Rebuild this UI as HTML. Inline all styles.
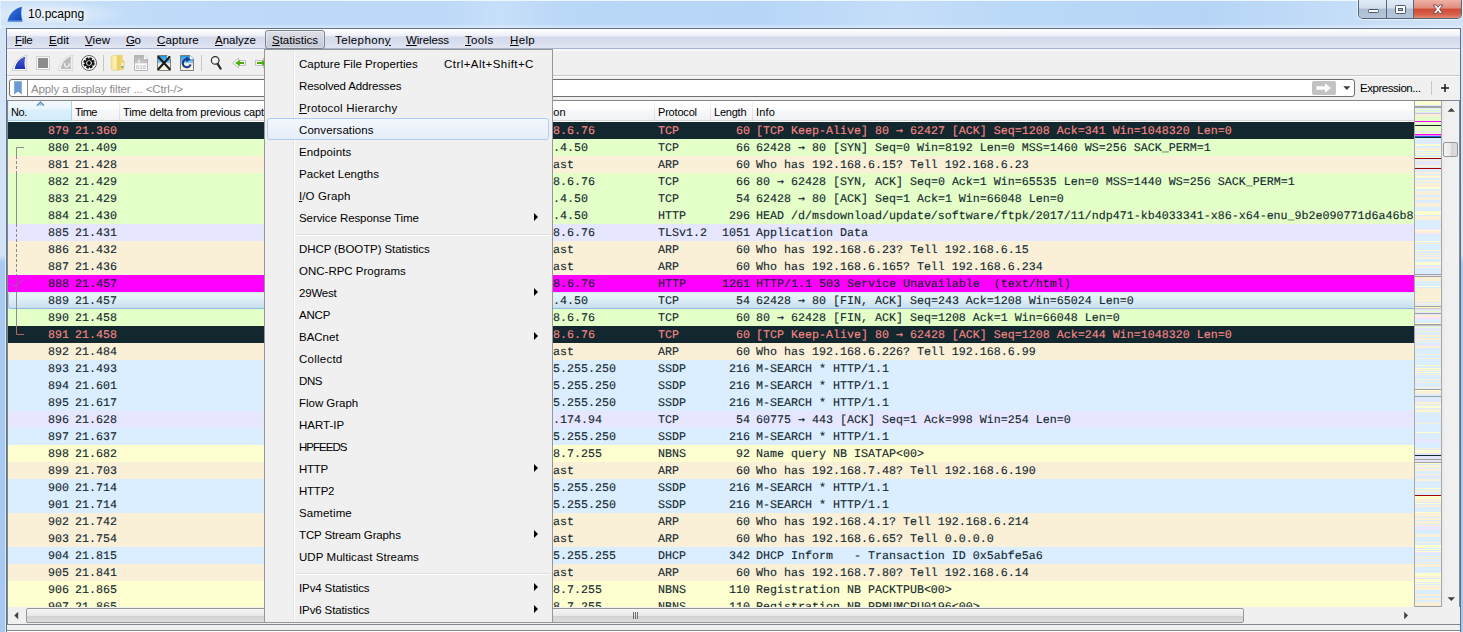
<!DOCTYPE html>
<html><head><meta charset="utf-8"><title>10.pcapng</title>
<style>
*{box-sizing:border-box;margin:0;padding:0}
html,body{width:1463px;height:632px;overflow:hidden}
body{position:relative;font-family:"Liberation Sans",sans-serif;font-size:12px;color:#000;
 background:linear-gradient(90deg,#cfe3f8 0,#c6def8 90px,#bddaf8 170px,#bcd9f8 440px,#c7dff9 500px,#b9d7f7 565px,#b7d6f7 760px,#c5def9 900px,#bad8f7 1010px,#b6d5f6 1210px,#c4ddf8 1340px,#d0e3f8 1463px)}
.abs,.abs>*{position:absolute}
div,span{position:absolute}
u{text-decoration:underline;text-underline-offset:1px}
/* frame */
#lb{left:0;top:29px;width:6px;height:603px;background:linear-gradient(178deg,#d5e5f8 0,#d3e3f7 226px,#a9caf0 233px,#a7c9f0 603px)}
#lb2{left:0;top:0;width:1px;height:632px;background:#e9f1fa}
#lb3{left:5px;top:29px;width:1px;height:603px;background:#dce9f7}
#rb{left:1461px;top:29px;width:2px;height:603px;background:linear-gradient(180deg,#d5e5f8 0,#d3e3f7 226px,#a9caf0 233px,#a7c9f0 603px)}
#client{left:6px;top:28px;width:1455px;height:610px;background:#f0f0f0;border:1px solid #5f7186;border-bottom:0}
/* title */
#ttop{left:0;top:0;width:1463px;height:1px;background:rgba(255,255,255,.75)}
#tbot{left:0;top:24px;width:1463px;height:4px;background:linear-gradient(180deg,rgba(255,255,255,0),rgba(255,255,255,.4))}
#tglow{left:-10px;top:0;width:160px;height:28px;background:radial-gradient(ellipse 75px 13px at 62px 14px,rgba(255,255,255,.55),rgba(255,255,255,0))}
#tbw{left:7px;top:50px;width:1453px;height:1px;background:#fbfbfb}
#ttl{left:28px;top:6px;font-size:12px;line-height:16px;color:#000;white-space:nowrap;text-shadow:0 0 6px #fff,0 0 6px #fff}
/* caption buttons */
#cap{left:1358px;top:0;width:104px;height:19px;border:1px solid #55657a;border-top:0;border-radius:0 0 5px 5px;overflow:hidden;box-shadow:0 0 0 1px rgba(255,255,255,.55)}
#cmin{left:0;top:0;width:28px;height:18px;background:linear-gradient(180deg,#e3ecf6 0,#d3dfed 45%,#aebfd4 50%,#b6c6da 100%);border-right:1px solid #55657a}
#cmax{left:28px;top:0;width:27px;height:18px;background:linear-gradient(180deg,#e3ecf6 0,#d3dfed 45%,#aebfd4 50%,#b6c6da 100%);border-right:1px solid #55657a}
#ccls{left:55px;top:0;width:47px;height:18px;background:linear-gradient(180deg,#eeb3a6 0,#e08c7c 45%,#cf4a33 50%,#d8604a 80%,#e08b72 100%)}
/* menubar */
#mb{left:7px;top:29px;width:1453px;height:21px;background:linear-gradient(180deg,#ffffff 0,#f0f2f9 6px,#e9ecf6 7px,#d5daec 8px,#d9deee 14px,#e2e6f3 19px,#e2e6f3 19px,#a9b3cf 19px,#a9b3cf 20px,#f4f4f6 20px)}
.mt{top:32px;font-size:11.5px;line-height:16px;white-space:nowrap}
#stat{left:265px;top:30px;width:60px;height:19px;border:1px solid #7b8494;border-radius:3px;background:linear-gradient(180deg,#dfe1e8 0,#d1d4de 50%,#c4c8d5 100%);box-shadow:inset 0 0 0 1px rgba(255,255,255,.35)}
/* toolbar */
#tbl1{left:7px;top:75px;width:1453px;height:1px;background:#c8c8c8}
#tbl2{left:7px;top:76px;width:1453px;height:1px;background:#fcfcfc}
.tsep{top:55px;width:1px;height:16px;background:#c6c6c6}
svg{position:absolute;overflow:visible}
/* filter */
#ff{left:9px;top:79px;width:1346px;height:18px;border:1px solid #6e6e6e;border-radius:3px;background:#fff}
#ffs{left:27px;top:80px;width:1px;height:16px;background:#8a8a8a}
#fph{left:31px;top:82px;font-size:11.5px;line-height:15px;color:#8c8c8c;white-space:nowrap;letter-spacing:-0.13px}
#fgo{left:1312px;top:81px;width:24px;height:14px;border-radius:2px;background:#c2c2c2}
#fexp{left:1360px;top:80px;font-size:11.5px;line-height:16px;white-space:nowrap;letter-spacing:-0.46px}
#fsep{left:1431px;top:81px;width:1px;height:14px;background:#c6c6c6}
/* list */
#lst{left:7px;top:100px;width:1453px;height:525px;border:1px solid #828790;background:#fff;overflow:hidden}
#hdr{left:8px;top:101px;width:1406px;height:20px;background:linear-gradient(180deg,#fff 0,#fff 8px,#f7f8fa 9px,#f1f2f4 19px,#d5d5d5 19px,#d5d5d5 20px)}
#hno{left:8px;top:101px;width:64px;height:20px;background:linear-gradient(180deg,#f2f9fd 0,#eaf6fd 8px,#dbeffb 9px,#d6ecfa 19px);border:1px solid #a3d6f2;border-top:0;border-left-color:#d9eef9}
.hs{top:102px;width:1px;height:18px;background:linear-gradient(180deg,#f2f2f2,#dcdcdc)}
.ht{top:105px;font-size:11px;line-height:14px;white-space:nowrap;color:#000}
.r{left:8px;width:1406px;height:17px;font-family:"Liberation Mono",monospace;font-size:11.667px;letter-spacing:0;line-height:17px;text-rendering:geometricPrecision;-webkit-text-stroke:0.12px;color:#12272e;white-space:pre;overflow:hidden}
.r span{top:1px;height:17px}
.r i{font-family:"DejaVu Sans Mono","Liberation Mono",monospace;font-style:normal;font-size:11.63px;line-height:0}
.no{left:0;width:61px;text-align:right}
.tm{left:67px}
.ds{left:503px}
.pr{left:650px}
.ln{left:702px;width:40px;text-align:right}
.in{left:748px}
.dk{background:#12272e;color:#f78787}
.gr{background:#e4ffc7}
.ar{background:#faf0d7}
.lv{background:#e7e6ff}
.mg{background:#ff00ff}
.bl{background:#daeeff}
.yl{background:#feffd0}
.sel{background:linear-gradient(180deg,#eaf6f7 0,#e1f0f6 35%,#d2e6f3 70%,#c7deef 100%);border-radius:3px 0 0 3px;box-shadow:inset 1px 0 0 #a9cbe8,inset 0 1px 0 #d3e8f5,inset 0 -1px 0 #8fb9e6}
/* minimap */
#mm{left:1414px;top:101px;width:28px;height:506px;background:#e9eefc;border-left:1px solid #a8a8a8;border-right:1px solid #a8a8a8}
#mmi{left:0;top:0;width:26px;height:506px;background:linear-gradient(180deg,#feffd0 0px,#feffd0 4px,#daeeff 4px,#daeeff 5px,#a0a0a0 5px,#a0a0a0 6px,#a9a9a9 6px,#a9a9a9 7px,#e7e6ff 7px,#e7e6ff 8px,#e4ffc7 8px,#e4ffc7 9px,#daeeff 9px,#daeeff 10px,#e4ffc7 10px,#e4ffc7 11px,#e7e6ff 11px,#e7e6ff 12px,#c8c8d4 12px,#c8c8d4 13px,#faf0d7 13px,#faf0d7 16px,#e4ffc7 16px,#e4ffc7 20px,#ff00ff 20px,#ff00ff 21px,#e4ffc7 21px,#e4ffc7 24px,#12272e 24px,#12272e 25px,#e4ffc7 25px,#e4ffc7 30px,#e7e6ff 30px,#e7e6ff 31px,#e4ffc7 31px,#e4ffc7 33px,#ff00ff 33px,#ff00ff 34px,#e48af6 34px,#e48af6 35px,#1b6fe0 35px,#1b6fe0 36px,#12272e 36px,#12272e 37px,#daeeff 37px,#daeeff 41px,#e7e6ff 41px,#e7e6ff 42px,#daeeff 42px,#daeeff 43px,#feffd0 43px,#feffd0 45px,#daeeff 45px,#daeeff 47px,#faf0d7 47px,#faf0d7 49px,#feffd0 49px,#feffd0 50px,#daeeff 50px,#daeeff 51px,#feffd0 51px,#feffd0 52px,#daeeff 52px,#daeeff 53px,#feffd0 53px,#feffd0 54px,#daeeff 54px,#daeeff 56px,#feffd0 56px,#feffd0 57px,#a40000 57px,#a40000 58px,#daeeff 58px,#daeeff 59px,#faf0d7 59px,#faf0d7 60px,#e7e6ff 60px,#e7e6ff 64px,#faf0d7 64px,#faf0d7 66px,#daeeff 66px,#daeeff 67px,#a40000 67px,#a40000 68px,#e7e6ff 68px,#e7e6ff 69px,#daeeff 69px,#daeeff 70px,#e7e6ff 70px,#e7e6ff 71px,#faf0d7 71px,#faf0d7 73px,#daeeff 73px,#daeeff 74px,#faf0d7 74px,#faf0d7 75px,#feffd0 75px,#feffd0 76px,#faf0d7 76px,#faf0d7 77px,#daeeff 77px,#daeeff 79px,#faf0d7 79px,#faf0d7 81px,#daeeff 81px,#daeeff 82px,#faf0d7 82px,#faf0d7 86px,#feffd0 86px,#feffd0 88px,#daeeff 88px,#daeeff 90px,#faf0d7 90px,#faf0d7 94px,#daeeff 94px,#daeeff 96px,#faf0d7 96px,#faf0d7 99px,#daeeff 99px,#daeeff 101px,#e7e6ff 101px,#e7e6ff 102px,#faf0d7 102px,#faf0d7 106px,#daeeff 106px,#daeeff 110px,#feffd0 110px,#feffd0 114px,#daeeff 114px,#daeeff 115px,#faf0d7 115px,#faf0d7 119px,#daeeff 119px,#daeeff 128px,#fce0ff 128px,#fce0ff 129px,#feffd0 129px,#feffd0 130px,#faf0d7 130px,#faf0d7 132px,#fce0ff 132px,#fce0ff 133px,#daeeff 133px,#daeeff 140px,#feffd0 140px,#feffd0 141px,#daeeff 141px,#daeeff 142px,#faf0d7 142px,#faf0d7 143px,#daeeff 143px,#daeeff 149px,#feffd0 149px,#feffd0 150px,#daeeff 150px,#daeeff 152px,#faf0d7 152px,#faf0d7 153px,#daeeff 153px,#daeeff 154px,#faf0d7 154px,#faf0d7 155px,#daeeff 155px,#daeeff 156px,#faf0d7 156px,#faf0d7 158px,#daeeff 158px,#daeeff 161px,#feffd0 161px,#feffd0 164px,#daeeff 164px,#daeeff 165px,#fce0ff 165px,#fce0ff 166px,#faf0d7 166px,#faf0d7 167px,#daeeff 167px,#daeeff 173px,#a0a0a0 173px,#a0a0a0 174px,#e7e6ff 174px,#e7e6ff 175px,#a0a0a0 175px,#a0a0a0 176px,#faf0d7 176px,#faf0d7 180px,#daeeff 180px,#daeeff 185px,#feffd0 185px,#feffd0 186px,#daeeff 186px,#daeeff 187px,#faf0d7 187px,#faf0d7 201px,#daeeff 201px,#daeeff 202px,#faf0d7 202px,#faf0d7 203px,#daeeff 203px,#daeeff 204px,#faf0d7 204px,#faf0d7 205px,#a0a0a0 205px,#a0a0a0 206px,#feffd0 206px,#feffd0 207px,#c4c4c4 207px,#c4c4c4 208px,#e7e6ff 208px,#e7e6ff 210px,#e4ffc7 210px,#e4ffc7 211px,#e7e6ff 211px,#e7e6ff 212px,#a0a0a0 212px,#a0a0a0 213px,#e7e6ff 213px,#e7e6ff 214px,#faf0d7 214px,#faf0d7 216px,#fce0ff 216px,#fce0ff 218px,#daeeff 218px,#daeeff 222px,#feffd0 222px,#feffd0 223px,#a0a0a0 223px,#a0a0a0 224px,#c4c4c4 224px,#c4c4c4 225px,#e7e6ff 225px,#e7e6ff 226px,#e4ffc7 226px,#e4ffc7 227px,#e7e6ff 227px,#e7e6ff 230px,#e4ffc7 230px,#e4ffc7 231px,#e7e6ff 231px,#e7e6ff 232px,#daeeff 232px,#daeeff 234px,#faf0d7 234px,#faf0d7 236px,#daeeff 236px,#daeeff 237px,#faf0d7 237px,#faf0d7 239px,#daeeff 239px,#daeeff 240px,#faf0d7 240px,#faf0d7 241px,#daeeff 241px,#daeeff 244px,#fce0ff 244px,#fce0ff 245px,#faf0d7 245px,#faf0d7 247px,#daeeff 247px,#daeeff 253px,#faf0d7 253px,#faf0d7 254px,#daeeff 254px,#daeeff 257px,#faf0d7 257px,#faf0d7 258px,#daeeff 258px,#daeeff 264px,#feffd0 264px,#feffd0 265px,#daeeff 265px,#daeeff 267px,#feffd0 267px,#feffd0 268px,#faf0d7 268px,#faf0d7 270px,#daeeff 270px,#daeeff 271px,#feffd0 271px,#feffd0 272px,#daeeff 272px,#daeeff 273px,#faf0d7 273px,#faf0d7 274px,#daeeff 274px,#daeeff 278px,#faf0d7 278px,#faf0d7 279px,#daeeff 279px,#daeeff 281px,#faf0d7 281px,#faf0d7 282px,#daeeff 282px,#daeeff 286px,#faf0d7 286px,#faf0d7 287px,#daeeff 287px,#daeeff 288px,#a0a0a0 288px,#a0a0a0 289px,#feffd0 289px,#feffd0 290px,#faf0d7 290px,#faf0d7 293px,#daeeff 293px,#daeeff 295px,#a0a0a0 295px,#a0a0a0 296px,#daeeff 296px,#daeeff 298px,#e7e6ff 298px,#e7e6ff 300px,#daeeff 300px,#daeeff 301px,#faf0d7 301px,#faf0d7 304px,#daeeff 304px,#daeeff 305px,#feffd0 305px,#feffd0 307px,#daeeff 307px,#daeeff 308px,#faf0d7 308px,#faf0d7 310px,#feffd0 310px,#feffd0 311px,#daeeff 311px,#daeeff 319px,#e7e6ff 319px,#e7e6ff 320px,#daeeff 320px,#daeeff 322px,#faf0d7 322px,#faf0d7 323px,#daeeff 323px,#daeeff 331px,#feffd0 331px,#feffd0 332px,#daeeff 332px,#daeeff 338px,#e7e6ff 338px,#e7e6ff 342px,#daeeff 342px,#daeeff 347px,#faf0d7 347px,#faf0d7 348px,#daeeff 348px,#daeeff 349px,#feffd0 349px,#feffd0 352px,#e7e6ff 352px,#e7e6ff 354px,#12272e 354px,#12272e 355px,#e7e6ff 355px,#e7e6ff 358px,#a0a0a0 358px,#a0a0a0 359px,#e7e6ff 359px,#e7e6ff 361px,#a0a0a0 361px,#a0a0a0 362px,#feffd0 362px,#feffd0 363px,#daeeff 363px,#daeeff 364px,#faf0d7 364px,#faf0d7 367px,#daeeff 367px,#daeeff 368px,#faf0d7 368px,#faf0d7 370px,#daeeff 370px,#daeeff 373px,#faf0d7 373px,#faf0d7 374px,#e7e6ff 374px,#e7e6ff 376px,#daeeff 376px,#daeeff 378px,#faf0d7 378px,#faf0d7 380px,#daeeff 380px,#daeeff 387px,#feffd0 387px,#feffd0 388px,#daeeff 388px,#daeeff 389px,#faf0d7 389px,#faf0d7 391px,#daeeff 391px,#daeeff 394px,#a40000 394px,#a40000 395px,#feffd0 395px,#feffd0 398px,#faf0d7 398px,#faf0d7 401px,#daeeff 401px,#daeeff 402px,#feffd0 402px,#feffd0 403px,#daeeff 403px,#daeeff 404px,#faf0d7 404px,#faf0d7 406px,#daeeff 406px,#daeeff 411px,#feffd0 411px,#feffd0 412px,#faf0d7 412px,#faf0d7 416px,#daeeff 416px,#daeeff 417px,#faf0d7 417px,#faf0d7 419px,#daeeff 419px,#daeeff 420px,#faf0d7 420px,#faf0d7 423px,#daeeff 423px,#daeeff 424px,#faf0d7 424px,#faf0d7 425px,#fce0ff 425px,#fce0ff 426px,#daeeff 426px,#daeeff 427px,#fce0ff 427px,#fce0ff 428px,#daeeff 428px,#daeeff 433px,#faf0d7 433px,#faf0d7 436px,#daeeff 436px,#daeeff 441px,#faf0d7 441px,#faf0d7 442px,#daeeff 442px,#daeeff 444px,#feffd0 444px,#feffd0 447px,#daeeff 447px,#daeeff 448px,#feffd0 448px,#feffd0 449px,#daeeff 449px,#daeeff 450px,#feffd0 450px,#feffd0 451px,#fce0ff 451px,#fce0ff 452px,#daeeff 452px,#daeeff 455px,#faf0d7 455px,#faf0d7 456px,#daeeff 456px,#daeeff 457px,#faf0d7 457px,#faf0d7 458px,#daeeff 458px,#daeeff 461px,#faf0d7 461px,#faf0d7 462px,#daeeff 462px,#daeeff 463px,#faf0d7 463px,#faf0d7 466px,#daeeff 466px,#daeeff 472px,#feffd0 472px,#feffd0 475px,#faf0d7 475px,#faf0d7 477px,#daeeff 477px,#daeeff 478px,#feffd0 478px,#feffd0 481px,#daeeff 481px,#daeeff 482px,#feffd0 482px,#feffd0 483px,#daeeff 483px,#daeeff 484px,#faf0d7 484px,#faf0d7 489px,#daeeff 489px,#daeeff 493px,#faf0d7 493px,#faf0d7 495px,#daeeff 495px,#daeeff 497px,#faf0d7 497px,#faf0d7 499px,#daeeff 499px,#daeeff 501px,#faf0d7 501px,#faf0d7 505px,#a0a0a0 505px,#a0a0a0 506px)}
/* scrollbars */
#vs{left:1442px;top:101px;width:17px;height:506px;background:linear-gradient(90deg,#e8e8e8 0,#f0f0f0 3px,#f1f1f1 100%)}
#vst{left:1443px;top:142px;width:15px;height:15px;border:1px solid #979797;border-radius:2px;background:linear-gradient(90deg,#f4f4f4 0,#e9e9e9 50%,#d5d5d5 55%,#dcdcdc 100%)}
#hsb{left:8px;top:607px;width:1406px;height:17px;background:#f0f0f0}
#hst{left:26px;top:608px;width:1218px;height:15px;border:1px solid #979797;border-radius:2px;background:linear-gradient(180deg,#f4f4f4 0,#e9e9e9 50%,#d2d2d2 55%,#dcdcdc 100%)}
#hcr{left:1414px;top:607px;width:46px;height:17px;background:#f0f0f0}
#btm{left:7px;top:625px;width:1453px;height:7px;background:#f0f0f0}
#btm2{left:7px;top:630px;width:1453px;height:2px;background:#fff;border-top:1px solid #828790}
/* menu */
#menu{left:264px;top:49px;width:289px;height:574px;background:#f0f0f0;border:1px solid #979797}
#mg1{left:293px;top:52px;width:1px;height:568px;background:#e2e3e3}
#mg2{left:294px;top:52px;width:1px;height:568px;background:#fff}
.mi{left:267px;width:283px;height:22px;font-size:11.5px;line-height:22px;white-space:nowrap}
.ml{left:32px;top:1px}
.ms{left:177px;top:1px}
.ma{left:267px;top:7px;width:0;height:0;border-left:4px solid #000;border-top:4px solid transparent;border-bottom:4px solid transparent}
.mhl{left:267px;width:282px;height:22px;border:1px solid #aecff7;border-radius:3px;background:linear-gradient(180deg,#f3f7fc 0,#e6eefa 100%)}
.msep{left:295px;width:255px;height:2px;border-top:1px solid #e0e0e0;border-bottom:1px solid #fff}

</style></head><body>
<div id="ttop"></div><div id="tbot"></div><div id="tglow"></div><div id="lb2"></div>
<div id="ttl">10.pcapng</div>
<div id="cap"><div id="cmin"></div><div id="cmax"></div><div id="ccls"></div></div>
<div id="client"></div>
<div id="lb"></div><div id="lb3"></div><div id="rb"></div>
<div id="mb"></div>
<div id="stat"></div>
<div class="mt" style="left:15px;letter-spacing:-0.27px"><u>F</u>ile</div>
<div class="mt" style="left:49px;letter-spacing:0.04px"><u>E</u>dit</div>
<div class="mt" style="left:85px;letter-spacing:0.07px"><u>V</u>iew</div>
<div class="mt" style="left:126px;letter-spacing:-0.37px"><u>G</u>o</div>
<div class="mt" style="left:157px;letter-spacing:0.14px"><u>C</u>apture</div>
<div class="mt" style="left:215px;letter-spacing:-0.00px"><u>A</u>nalyze</div>
<div class="mt" style="left:272px;letter-spacing:-0.01px"><u>S</u>tatistics</div>
<div class="mt" style="left:335px;letter-spacing:0.38px">Telephon<u>y</u></div>
<div class="mt" style="left:406px;letter-spacing:-0.15px"><u>W</u>ireless</div>
<div class="mt" style="left:465px;letter-spacing:0.33px"><u>T</u>ools</div>
<div class="mt" style="left:510px;letter-spacing:0.36px"><u>H</u>elp</div>
<div id="tbw"></div><div id="tbl1"></div><div id="tbl2"></div>
<div class="tsep" style="left:103px"></div>
<div class="tsep" style="left:201px"></div>
<div id="ff"></div><div id="ffs"></div>
<div id="fph">Apply a display filter ... &lt;Ctrl-/&gt;</div>
<div id="fgo"></div>
<div id="fexp">Expression...</div>
<div id="fsep"></div>
<div id="lst"></div>
<div id="hdr"></div><div id="hno"></div>
<div class="hs" style="left:119px"></div>
<div class="hs" style="left:654px"></div>
<div class="hs" style="left:710px"></div>
<div class="hs" style="left:752px"></div>
<div class="ht" style="left:11px;letter-spacing:-0.37px">No.</div>
<div class="ht" style="left:75px;letter-spacing:-0.55px">Time</div>
<div class="ht" style="left:123px;letter-spacing:-0.12px">Time delta from previous captured frame</div>
<div class="ht" style="left:511px;letter-spacing:-0.05px">Destination</div>
<div class="ht" style="left:658px;letter-spacing:-0.19px">Protocol</div>
<div class="ht" style="left:714px;letter-spacing:-0.23px">Length</div>
<div class="ht" style="left:756px;letter-spacing:0.15px">Info</div>
<div class="r dk" style="top:122px"><span class="no">879</span><span class="tm">21.360</span><span class="ds">192.168.6.76</span><span class="pr">TCP</span><span class="ln">60</span><span class="in">[TCP Keep-Alive] 80 <i>→</i> 62427 [ACK] Seq=1208 Ack=341 Win=1048320 Len=0</span></div>
<div class="r gr" style="top:139px"><span class="no">880</span><span class="tm">21.409</span><span class="ds">13.107.4.50</span><span class="pr">TCP</span><span class="ln">66</span><span class="in">62428 <i>→</i> 80 [SYN] Seq=0 Win=8192 Len=0 MSS=1460 WS=256 SACK_PERM=1</span></div>
<div class="r ar" style="top:156px"><span class="no">881</span><span class="tm">21.428</span><span class="ds">Broadcast</span><span class="pr">ARP</span><span class="ln">60</span><span class="in">Who has 192.168.6.15? Tell 192.168.6.23</span></div>
<div class="r gr" style="top:173px"><span class="no">882</span><span class="tm">21.429</span><span class="ds">192.168.6.76</span><span class="pr">TCP</span><span class="ln">66</span><span class="in">80 <i>→</i> 62428 [SYN, ACK] Seq=0 Ack=1 Win=65535 Len=0 MSS=1440 WS=256 SACK_PERM=1</span></div>
<div class="r gr" style="top:190px"><span class="no">883</span><span class="tm">21.429</span><span class="ds">13.107.4.50</span><span class="pr">TCP</span><span class="ln">54</span><span class="in">62428 <i>→</i> 80 [ACK] Seq=1 Ack=1 Win=66048 Len=0</span></div>
<div class="r gr" style="top:207px"><span class="no">884</span><span class="tm">21.430</span><span class="ds">13.107.4.50</span><span class="pr">HTTP</span><span class="ln">296</span><span class="in">HEAD /d/msdownload/update/software/ftpk/2017/11/ndp471-kb4033341-x86-x64-enu_9b2e090771d6a46b8</span></div>
<div class="r lv" style="top:224px"><span class="no">885</span><span class="tm">21.431</span><span class="ds">192.168.6.76</span><span class="pr">TLSv1.2</span><span class="ln">1051</span><span class="in">Application Data</span></div>
<div class="r ar" style="top:241px"><span class="no">886</span><span class="tm">21.432</span><span class="ds">Broadcast</span><span class="pr">ARP</span><span class="ln">60</span><span class="in">Who has 192.168.6.23? Tell 192.168.6.15</span></div>
<div class="r ar" style="top:258px"><span class="no">887</span><span class="tm">21.436</span><span class="ds">Broadcast</span><span class="pr">ARP</span><span class="ln">60</span><span class="in">Who has 192.168.6.165? Tell 192.168.6.234</span></div>
<div class="r mg" style="top:275px"><span class="no">888</span><span class="tm">21.457</span><span class="ds">192.168.6.76</span><span class="pr">HTTP</span><span class="ln">1261</span><span class="in">HTTP/1.1 503 Service Unavailable  (text/html)</span></div>
<div class="r sel" style="top:292px"><span class="no">889</span><span class="tm">21.457</span><span class="ds">13.107.4.50</span><span class="pr">TCP</span><span class="ln">54</span><span class="in">62428 <i>→</i> 80 [FIN, ACK] Seq=243 Ack=1208 Win=65024 Len=0</span></div>
<div class="r gr" style="top:309px"><span class="no">890</span><span class="tm">21.458</span><span class="ds">192.168.6.76</span><span class="pr">TCP</span><span class="ln">60</span><span class="in">80 <i>→</i> 62428 [FIN, ACK] Seq=1208 Ack=1 Win=66048 Len=0</span></div>
<div class="r dk" style="top:326px"><span class="no">891</span><span class="tm">21.458</span><span class="ds">192.168.6.76</span><span class="pr">TCP</span><span class="ln">60</span><span class="in">[TCP Keep-Alive] 80 <i>→</i> 62428 [ACK] Seq=1208 Ack=244 Win=1048320 Len=0</span></div>
<div class="r ar" style="top:343px"><span class="no">892</span><span class="tm">21.484</span><span class="ds">Broadcast</span><span class="pr">ARP</span><span class="ln">60</span><span class="in">Who has 192.168.6.226? Tell 192.168.6.99</span></div>
<div class="r bl" style="top:360px"><span class="no">893</span><span class="tm">21.493</span><span class="ds">239.255.255.250</span><span class="pr">SSDP</span><span class="ln">216</span><span class="in">M-SEARCH * HTTP/1.1</span></div>
<div class="r bl" style="top:377px"><span class="no">894</span><span class="tm">21.601</span><span class="ds">239.255.255.250</span><span class="pr">SSDP</span><span class="ln">216</span><span class="in">M-SEARCH * HTTP/1.1</span></div>
<div class="r bl" style="top:394px"><span class="no">895</span><span class="tm">21.617</span><span class="ds">239.255.255.250</span><span class="pr">SSDP</span><span class="ln">216</span><span class="in">M-SEARCH * HTTP/1.1</span></div>
<div class="r lv" style="top:411px"><span class="no">896</span><span class="tm">21.628</span><span class="ds">216.58.174.94</span><span class="pr">TCP</span><span class="ln">54</span><span class="in">60775 <i>→</i> 443 [ACK] Seq=1 Ack=998 Win=254 Len=0</span></div>
<div class="r bl" style="top:428px"><span class="no">897</span><span class="tm">21.637</span><span class="ds">239.255.255.250</span><span class="pr">SSDP</span><span class="ln">216</span><span class="in">M-SEARCH * HTTP/1.1</span></div>
<div class="r yl" style="top:445px"><span class="no">898</span><span class="tm">21.682</span><span class="ds">192.168.7.255</span><span class="pr">NBNS</span><span class="ln">92</span><span class="in">Name query NB ISATAP&lt;00&gt;</span></div>
<div class="r ar" style="top:462px"><span class="no">899</span><span class="tm">21.703</span><span class="ds">Broadcast</span><span class="pr">ARP</span><span class="ln">60</span><span class="in">Who has 192.168.7.48? Tell 192.168.6.190</span></div>
<div class="r bl" style="top:479px"><span class="no">900</span><span class="tm">21.714</span><span class="ds">239.255.255.250</span><span class="pr">SSDP</span><span class="ln">216</span><span class="in">M-SEARCH * HTTP/1.1</span></div>
<div class="r bl" style="top:496px"><span class="no">901</span><span class="tm">21.714</span><span class="ds">239.255.255.250</span><span class="pr">SSDP</span><span class="ln">216</span><span class="in">M-SEARCH * HTTP/1.1</span></div>
<div class="r ar" style="top:513px"><span class="no">902</span><span class="tm">21.742</span><span class="ds">Broadcast</span><span class="pr">ARP</span><span class="ln">60</span><span class="in">Who has 192.168.4.1? Tell 192.168.6.214</span></div>
<div class="r ar" style="top:530px"><span class="no">903</span><span class="tm">21.754</span><span class="ds">Broadcast</span><span class="pr">ARP</span><span class="ln">60</span><span class="in">Who has 192.168.6.65? Tell 0.0.0.0</span></div>
<div class="r bl" style="top:547px"><span class="no">904</span><span class="tm">21.815</span><span class="ds">255.255.255.255</span><span class="pr">DHCP</span><span class="ln">342</span><span class="in">DHCP Inform   - Transaction ID 0x5abfe5a6</span></div>
<div class="r ar" style="top:564px"><span class="no">905</span><span class="tm">21.841</span><span class="ds">Broadcast</span><span class="pr">ARP</span><span class="ln">60</span><span class="in">Who has 192.168.7.80? Tell 192.168.6.14</span></div>
<div class="r yl" style="top:581px"><span class="no">906</span><span class="tm">21.865</span><span class="ds">192.168.7.255</span><span class="pr">NBNS</span><span class="ln">110</span><span class="in">Registration NB PACKTPUB&lt;00&gt;</span></div>
<div class="r yl" style="top:598px"><span class="no">907</span><span class="tm">21.865</span><span class="ds">192.168.7.255</span><span class="pr">NBNS</span><span class="ln">110</span><span class="in">Registration NB PPMUMCPU0196&lt;00&gt;</span></div>
<div id="mm"><div id="mmi"></div></div>
<div id="vs"></div><div id="vst"></div>
<div id="hsb"></div><div id="hst"></div><div id="hcr"></div>
<div id="btm"></div><div id="btm2"></div>
<svg style="left:0;top:0" width="1463" height="632" viewBox="0 0 1463 632">
<defs>
<linearGradient id="gfin" x1="0" y1="0" x2="0" y2="1"><stop offset="0" stop-color="#4a5fd0"/><stop offset="1" stop-color="#1c2fb4"/></linearGradient>
<linearGradient id="gfin2" x1="0" y1="0" x2="1" y2="1"><stop offset="0" stop-color="#3c7be0"/><stop offset="1" stop-color="#0f3fb8"/></linearGradient>
<linearGradient id="gdoc" x1="0" y1="0" x2="0" y2="1"><stop offset="0" stop-color="#1f93e0"/><stop offset=".45" stop-color="#7cc3ee"/><stop offset=".55" stop-color="#f4f1dc"/><stop offset="1" stop-color="#f7f5e3"/></linearGradient>
<linearGradient id="gfold" x1="0" y1="0" x2="1" y2="0"><stop offset="0" stop-color="#f6e58f"/><stop offset=".35" stop-color="#fbf2b8"/><stop offset=".5" stop-color="#e9cf66"/><stop offset="1" stop-color="#f0d876"/></linearGradient>
<linearGradient id="ggray" x1="0" y1="0" x2="0" y2="1"><stop offset="0" stop-color="#b4b4b4"/><stop offset=".5" stop-color="#c6c6c6"/><stop offset=".55" stop-color="#fdfdfd"/><stop offset="1" stop-color="#fff"/></linearGradient>
</defs>
<!-- title icon -->
<path d="M7.5 21.5 C9.5 13 15 8.5 22 6.8 C20.8 11.5 21 16.5 22.5 21.5 Z" fill="url(#gfin2)"/>
<path d="M7.5 21.5 L22.5 21.5 L22.2 20 L8.2 20 Z" fill="#5b8de0" opacity=".7"/>
<!-- tb1 fin -->
<path d="M12.5 70.5 C13.3 62 19.5 56.3 27 55.3 C26 60 26 65.5 27 70.5 Z" fill="#fafafa" stroke="#c9c9c9" stroke-width=".8"/>
<path d="M14.8 69 C15.8 62.5 20 58 25.4 56.8 C24.3 61 24.3 65 25.3 69 Z" fill="url(#gfin)"/>
<!-- tb2 stop -->
<rect x="36.5" y="56.5" width="13" height="13" fill="#fbfbfb" stroke="#cfcfcf" stroke-width="1"/>
<rect x="38" y="58" width="10" height="10" fill="#8c8c8c"/>
<!-- tb3 gray fin -->
<path d="M58.5 70.5 C59.3 62 65.5 56.3 73 55.3 C72 60 72 65.5 73 70.5 Z" fill="#f6f6f6" stroke="#d2d2d2" stroke-width=".8"/>
<path d="M60.8 69 C61.8 62.5 66 58 71.4 56.8 C70.3 61 70.3 65 71.3 69 Z" fill="#b9b9b9"/>
<path d="M65.2 63.2 A2.3 2.3 0 1 0 68.8 63.4" fill="none" stroke="#f2f2f2" stroke-width="1.3"/>
<!-- tb4 gear -->
<circle cx="89" cy="63" r="7.5" fill="#fff" stroke="#3a3a3a" stroke-width=".8"/>
<circle cx="89" cy="63" r="4.4" fill="none" stroke="#111" stroke-width="2.6" stroke-dasharray="2.3 1.15"/>
<circle cx="89" cy="63" r="3.6" fill="none" stroke="#111" stroke-width="1.6"/>
<circle cx="89" cy="63" r="1.9" fill="#000"/>
<!-- folder -->
<path d="M111.3 56 L116.5 55.3 L122.3 55.3 L122.3 60 L124 60.5 L124 69 L116.5 70.5 L111.3 69.5 Z" fill="url(#gfold)" stroke="#e2c75e" stroke-width=".5"/>
<rect x="121.6" y="63" width="1.3" height="3" fill="#fff"/><rect x="121.6" y="66" width="1.3" height="2" fill="#3aa0e8"/>
<!-- file 010 -->
<path d="M134.5 55.5 L144 55.5 L147.5 59 L147.5 70.5 L134.5 70.5 Z" fill="url(#ggray)" stroke="#b5b5b5" stroke-width="1"/>
<path d="M144 55.5 L144 59 L147.5 59 Z" fill="#fff"/>
<path d="M138 62.5 L139 58.5 L140 62.5 Z" fill="#fff"/>
<text x="135.8" y="68.6" font-family="Liberation Sans, sans-serif" font-size="5.8" fill="#b9b9b9" font-weight="bold" letter-spacing=".3">010</text>
<!-- close file -->
<path d="M157.5 55.5 L167 55.5 L170.5 59 L170.5 70.5 L157.5 70.5 Z" fill="url(#gdoc)" stroke="#7d7d7d" stroke-width="1"/>
<path d="M167 55.5 L167 59 L170.5 59 Z" fill="#fff"/>
<path d="M158.5 57 L169.5 69 M169.5 57 L158.5 69" stroke="#1a1a1a" stroke-width="2.1" stroke-linecap="round"/>
<!-- reload -->
<path d="M180.5 55.5 L190 55.5 L193.5 59 L193.5 70.5 L180.5 70.5 Z" fill="url(#gdoc)" stroke="#7d7d7d" stroke-width="1"/>
<path d="M190 55.5 L190 59 L193.5 59 Z" fill="#fff"/>
<path d="M190.6 64.5 A4 4 0 1 1 187.6 59.3" fill="none" stroke="#1a3a94" stroke-width="2.2"/>
<path d="M186.3 56.6 L190.6 59.6 L186.3 62.3 Z" fill="#1a3a94"/>
<!-- magnifier -->
<circle cx="215.2" cy="60.4" r="3.8" fill="#f4f4f4" stroke="#2a2f33" stroke-width="1.2"/>
<path d="M217.6 63.8 L220.6 68.6" stroke="#2a2f33" stroke-width="2.2" stroke-linecap="round"/>
<!-- left arrow -->
<path d="M232.5 63 L238.5 58.2 L238.5 60.6 L245.5 60.6 L245.5 65.4 L238.5 65.4 L238.5 67.8 Z" fill="#fcfcfc" stroke="#b5b5b5" stroke-width=".9"/>
<path d="M235 63 L239.8 60 L239.8 62 L244 62 L244 64 L239.8 64 L239.8 66 Z" fill="#4aae00"/>
<!-- right arrow (partially hidden) -->
<path d="M269.5 63 L263.5 58.2 L263.5 60.6 L255.5 60.6 L255.5 65.4 L263.5 65.4 L263.5 67.8 Z" fill="#fcfcfc" stroke="#b5b5b5" stroke-width=".9"/>
<path d="M267 63 L262.2 60 L262.2 62 L257 62 L257 64 L262.2 64 L262.2 66 Z" fill="#4aae00"/>
<!-- bookmark -->
<path d="M14.2 81.3 L21.8 81.3 L21.8 94.6 L18 91.6 L14.2 94.6 Z" fill="#6a9ad4"/>
<!-- filter go arrow -->
<path d="M1316.5 86.3 L1325 86.3 L1325 83.2 L1331 88 L1325 92.8 L1325 89.7 L1316.5 89.7 Z" fill="#fff"/>
<!-- dropdown arrow -->
<path d="M1343.3 86.3 L1350.3 86.3 L1346.8 90 Z" fill="#3c3c3c"/>
<!-- plus -->
<path d="M1441 88 L1449 88 M1445 84 L1445 92" stroke="#1a1a1a" stroke-width="1.5"/>
<!-- sort arrow -->
<path d="M37 105.6 L40.5 102 L44 105.6" fill="none" stroke="#4a7eb0" stroke-width="1.2"/>
<path d="M38 105.6 L40.5 103 L43 105.6 Z" fill="#9fc4e4"/>
<!-- scrollbar arrows -->
<path d="M1447.6 111.8 L1451.3 107.9 L1455 111.8 Z" fill="#3f3f3f"/>
<path d="M1447.6 597.2 L1455 597.2 L1451.3 601 Z" fill="#3f3f3f"/>
<path d="M18.2 611.8 L18.2 619.2 L14.3 615.5 Z" fill="#3f3f3f"/>
<path d="M1404.2 611.8 L1404.2 619.2 L1408 615.5 Z" fill="#3f3f3f"/>
<!-- h thumb grip -->
<path d="M633.5 612 L633.5 619 M635.5 612 L635.5 619 M637.5 612 L637.5 619" stroke="#6b6b6b" stroke-width="1"/>
<!-- caption glyphs -->
<rect x="1368.5" y="9.5" width="10" height="3" rx=".8" fill="#fbfbfb" stroke="#4e5866" stroke-width="1"/>
<rect x="1395.5" y="5.5" width="10" height="8" rx=".8" fill="#fbfbfb" stroke="#4e5866" stroke-width="1"/>
<rect x="1398.5" y="8.5" width="4" height="2" fill="#b9c7d9" stroke="#4e5866" stroke-width="1"/>
<path d="M1433.2 5 L1436.3 5 L1438 7.2 L1439.7 5 L1442.8 5 L1439.6 9.2 L1442.8 13.4 L1439.7 13.4 L1438 11.2 L1436.3 13.4 L1433.2 13.4 L1436.4 9.2 Z" fill="#fbfbfb" stroke="#5a3b3b" stroke-width=".8"/>
<!-- conversation bracket -->
<path d="M24 147.5 L16.5 147.5 L16.5 156" fill="none" stroke="#8a8f88" stroke-width="1"/>
<path d="M16.5 156 L16.5 173" fill="none" stroke="#8a8a8a" stroke-width="1" stroke-dasharray="3 2"/>
<path d="M16.5 173 L16.5 224" fill="none" stroke="#8a8f88" stroke-width="1"/>
<path d="M16.5 224 L16.5 275" fill="none" stroke="#8a8a8a" stroke-width="1" stroke-dasharray="3 2"/>
<path d="M16.5 275 L16.5 292" fill="none" stroke="#9a509a" stroke-width="1"/>
<path d="M16.5 292 L16.5 326" fill="none" stroke="#8a8f90" stroke-width="1"/>
<path d="M16.5 326 L16.5 334.5 L24 334.5" fill="none" stroke="#b06868" stroke-width="1"/>
<path d="M10 283.3 L13.8 286.8 L23 280" fill="none" stroke="#a45aa4" stroke-width="1"/>
</svg>

<div id="menu"></div><div id="mg1"></div><div id="mg2"></div>
<div class="mi" style="top:52px"><span class="ml" style="letter-spacing:0.02px">Capture File Properties</span><span class="ms" style="letter-spacing:0.44px">Ctrl+Alt+Shift+C</span></div>
<div class="mi" style="top:74px"><span class="ml" style="letter-spacing:-0.14px">Resolved Addresses</span></div>
<div class="mi" style="top:96px"><span class="ml" style="letter-spacing:0.21px"><u>P</u>rotocol Hierarchy</span></div>
<div class="mhl" style="top:118px"></div><div class="mi" style="top:118px"><span class="ml" style="letter-spacing:0.08px">Conversations</span></div>
<div class="mi" style="top:140px"><span class="ml" style="letter-spacing:0.15px">Endpoints</span></div>
<div class="mi" style="top:162px"><span class="ml" style="letter-spacing:0.05px">Packet Lengths</span></div>
<div class="mi" style="top:184px"><span class="ml" style="letter-spacing:0.11px"><u>I</u>/O Graph</span></div>
<div class="mi" style="top:206px"><span class="ml" style="letter-spacing:-0.08px">Service Response Time</span><span class="ma"></span></div>
<div class="msep" style="top:234px"></div>
<div class="mi" style="top:237px"><span class="ml" style="letter-spacing:-0.09px">DHCP (BOOTP) Statistics</span></div>
<div class="mi" style="top:259px"><span class="ml" style="letter-spacing:0.00px">ONC-RPC Programs</span></div>
<div class="mi" style="top:281px"><span class="ml" style="letter-spacing:-0.20px">29West</span><span class="ma"></span></div>
<div class="mi" style="top:303px"><span class="ml" style="letter-spacing:-0.18px">ANCP</span></div>
<div class="mi" style="top:325px"><span class="ml" style="letter-spacing:-0.01px">BACnet</span><span class="ma"></span></div>
<div class="mi" style="top:347px"><span class="ml" style="letter-spacing:0.24px">Collectd</span></div>
<div class="mi" style="top:369px"><span class="ml" style="letter-spacing:-0.42px">DNS</span></div>
<div class="mi" style="top:391px"><span class="ml" style="letter-spacing:-0.03px">Flow Graph</span></div>
<div class="mi" style="top:413px"><span class="ml" style="letter-spacing:-0.01px">HART-IP</span></div>
<div class="mi" style="top:435px"><span class="ml" style="letter-spacing:-0.98px">HPFEEDS</span></div>
<div class="mi" style="top:457px"><span class="ml" style="letter-spacing:-0.25px">HTTP</span><span class="ma"></span></div>
<div class="mi" style="top:479px"><span class="ml" style="letter-spacing:-0.24px">HTTP2</span></div>
<div class="mi" style="top:501px"><span class="ml" style="letter-spacing:0.14px">Sametime</span></div>
<div class="mi" style="top:523px"><span class="ml" style="letter-spacing:-0.13px">TCP Stream Graphs</span><span class="ma"></span></div>
<div class="mi" style="top:545px"><span class="ml" style="letter-spacing:0.06px">UDP Multicast Streams</span></div>
<div class="msep" style="top:573px"></div>
<div class="mi" style="top:576px"><span class="ml" style="letter-spacing:-0.12px">IPv4 Statistics</span><span class="ma"></span></div>
<div class="mi" style="top:598px"><span class="ml" style="letter-spacing:-0.12px">IPv6 Statistics</span><span class="ma"></span></div>
</body></html>
